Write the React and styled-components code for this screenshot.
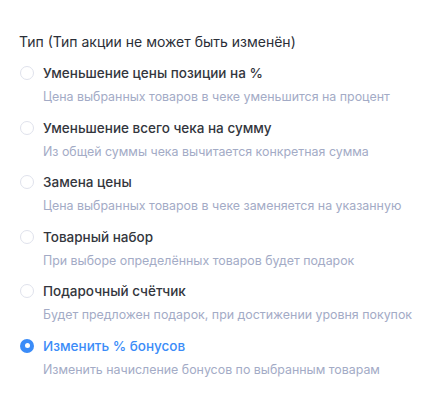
import React, { useState } from "react";
import styled, { createGlobalStyle } from "styled-components";

const GlobalStyle = createGlobalStyle`
  body {
    margin: 0;
    background: #ffffff;
    font-family: Inter, "Noto Sans", sans-serif;
  }
`;

const Wrapper = styled.div`
  padding: 32px 19px 0;
`;

const Heading = styled.div`
  font-size: 14px;
  line-height: 20px;
  color: #2b2f38;
  margin-bottom: 11px;
`;

const List = styled.div`
  display: flex;
  flex-direction: column;
  gap: 10.6px;
`;

const Option = styled.label`
  display: flex;
  gap: 9px;
  cursor: pointer;
`;

const Radio = styled.span`
  flex: none;
  box-sizing: border-box;
  width: 14px;
  height: 14px;
  margin: 3px 0 0 1px;
  border-radius: 50%;
  border: ${(p) => (p.checked ? "none" : "1px solid #dfe2ec")};
  background: ${(p) => (p.checked ? "#3b8cf8" : "#fff")};
  display: flex;
  align-items: center;
  justify-content: center;
  &::after {
    content: "";
    display: ${(p) => (p.checked ? "block" : "none")};
    width: 5px;
    height: 5px;
    border-radius: 50%;
    background: #fff;
  }
`;

const Texts = styled.div`
  display: flex;
  flex-direction: column;
  gap: 4px;
`;

const Title = styled.div`
  font-size: 13.5px;
  line-height: 20px;
  font-weight: 500;
  color: ${(p) => (p.checked ? "#3b8cf8" : "#33363d")};
`;

const Desc = styled.div`
  font-size: 12.4px;
  line-height: 20px;
  color: #a3abc6;
`;

const options = [
  {
    title: "Уменьшение цены позиции на %",
    desc: "Цена выбранных товаров в чеке уменьшится на процент",
  },
  {
    title: "Уменьшение всего чека на сумму",
    desc: "Из общей суммы чека вычитается конкретная сумма",
  },
  {
    title: "Замена цены",
    desc: "Цена выбранных товаров в чеке заменяется на указанную",
  },
  {
    title: "Товарный набор",
    desc: "При выборе определённых товаров будет подарок",
  },
  {
    title: "Подарочный счётчик",
    desc: "Будет предложен подарок, при достижении уровня покупок",
  },
  {
    title: "Изменить % бонусов",
    desc: "Изменить начисление бонусов по выбранным товарам",
  },
];

export default function App() {
  const [selected] = useState(5);
  return (
    <Wrapper>
      <GlobalStyle />
      <Heading>Тип (Тип акции не может быть изменён)</Heading>
      <List>
        {options.map((o, i) => (
          <Option key={o.title}>
            <Radio checked={selected === i} />
            <Texts>
              <Title checked={selected === i}>{o.title}</Title>
              <Desc>{o.desc}</Desc>
            </Texts>
          </Option>
        ))}
      </List>
    </Wrapper>
  );
}
